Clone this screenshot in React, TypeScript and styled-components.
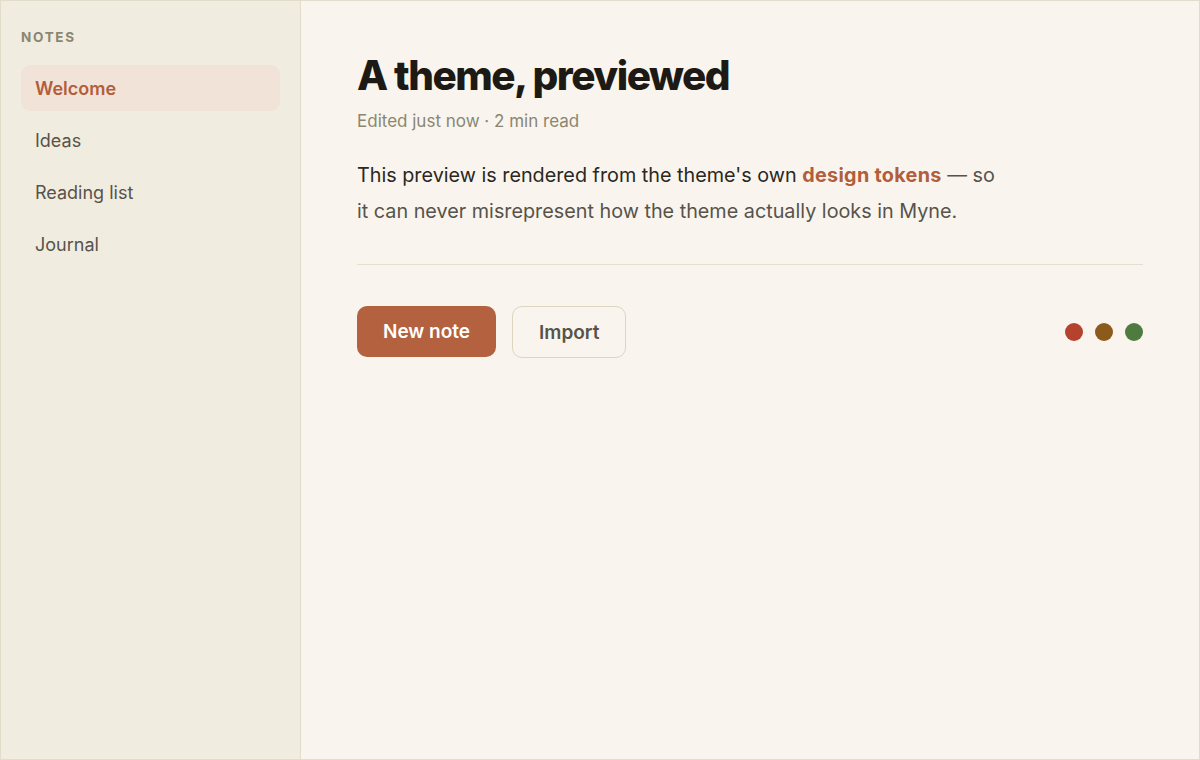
import styled, { createGlobalStyle } from "styled-components";

const GlobalStyle = createGlobalStyle`
  * {
    box-sizing: border-box;
  }

  body {
    margin: 0;
    font-family: Inter, "Noto Sans", sans-serif;
    background-color: #f9f5ee;
  }
`;

export default function App() {
  const notes = ["Welcome", "Ideas", "Reading list", "Journal"];
  const swatches = ["#b5412f", "#8c5a1b", "#4f7b41"];

  return (
    <>
      <GlobalStyle />
      <Frame>
        <Sidebar>
          <SectionLabel>NOTES</SectionLabel>
          <NoteList>
            {notes.map((note, i) => (
              <NoteItem key={note} $active={i === 0}>
                {note}
              </NoteItem>
            ))}
          </NoteList>
        </Sidebar>
        <Main>
          <Title>A theme, previewed</Title>
          <Meta>Edited just now · 2 min read</Meta>
          <Body>
            This preview is rendered from the theme's own{" "}
            <Accent>design tokens</Accent>{" "}
            <Muted>— so it can never misrepresent how the theme actually looks in Myne.</Muted>
          </Body>
          <Divider />
          <Actions>
            <Buttons>
              <PrimaryButton>New note</PrimaryButton>
              <GhostButton>Import</GhostButton>
            </Buttons>
            <Swatches>
              {swatches.map((c) => (
                <Dot key={c} $color={c} />
              ))}
            </Swatches>
          </Actions>
        </Main>
      </Frame>
    </>
  );
}

// 전체 프레임
const Frame = styled.div`
  display: flex;
  width: 1200px;
  height: 760px;
  border: 1px solid #e3dccb;
  background-color: #f9f5ee;
`;

// 왼쪽 사이드바
const Sidebar = styled.div`
  width: 300px;
  flex-shrink: 0;
  padding: 28px 20px;
  background-color: #f1ece0;
  border-right: 1px solid #e3dccb;
`;

const SectionLabel = styled.div`
  font-size: 13.5px;
  font-weight: 700;
  letter-spacing: 1.7px;
  color: #8a8671;
  margin-bottom: 20px;
`;

const NoteList = styled.div`
  display: flex;
  flex-direction: column;
  gap: 6px;
`;

interface NoteItemProps {
  $active: boolean;
}

const NoteItem = styled.div<NoteItemProps>`
  height: 46px;
  display: flex;
  align-items: center;
  padding: 0 14px;
  border-radius: 9px;
  font-size: 18px;
  font-weight: ${(p) => (p.$active ? 600 : 400)};
  color: ${(p) => (p.$active ? "#b25d3b" : "#57534a")};
  background-color: ${(p) => (p.$active ? "#f2e3d8" : "transparent")};
`;

// 메인 영역
const Main = styled.div`
  flex: 1;
  padding: 51px 56px 0 56px;
`;

const Title = styled.h1`
  margin: 0;
  font-size: 40.5px;
  line-height: 48px;
  font-weight: 800;
  letter-spacing: -1.5px;
  color: #1d1a15;
`;

const Meta = styled.div`
  margin-top: 9px;
  font-size: 17px;
  line-height: 24px;
  color: #8a8672;
`;

const Body = styled.p`
  margin: 24px 0 0 0;
  max-width: 645px;
  font-size: 19.8px;
  line-height: 36px;
  color: #2b2821;
`;

const Accent = styled.span`
  color: #b25d3b;
  font-weight: 700;
  letter-spacing: 0.3px;
`;

const Muted = styled.span`
  color: #57534a;
`;

const Divider = styled.div`
  height: 1px;
  background-color: #e6dfcd;
  margin-top: 35px;
`;

const Actions = styled.div`
  display: flex;
  align-items: center;
  justify-content: space-between;
  margin-top: 41px;
`;

const Buttons = styled.div`
  display: flex;
  gap: 16px;
`;

const PrimaryButton = styled.button`
  height: 51px;
  padding: 0 26px;
  border: none;
  border-radius: 10px;
  background-color: #b3613e;
  color: #ffffff;
  font-family: inherit;
  font-size: 19px;
  font-weight: 600;
`;

const GhostButton = styled.button`
  height: 52px;
  padding: 0 26px;
  border: 1px solid #ddd5be;
  border-radius: 10px;
  background-color: transparent;
  color: #57534a;
  font-family: inherit;
  font-size: 19px;
  font-weight: 600;
`;

const Swatches = styled.div`
  display: flex;
  gap: 12px;
`;

const Dot = styled.span<{ $color: string }>`
  width: 18px;
  height: 18px;
  border-radius: 50%;
  background-color: ${(p) => p.$color};
`;
